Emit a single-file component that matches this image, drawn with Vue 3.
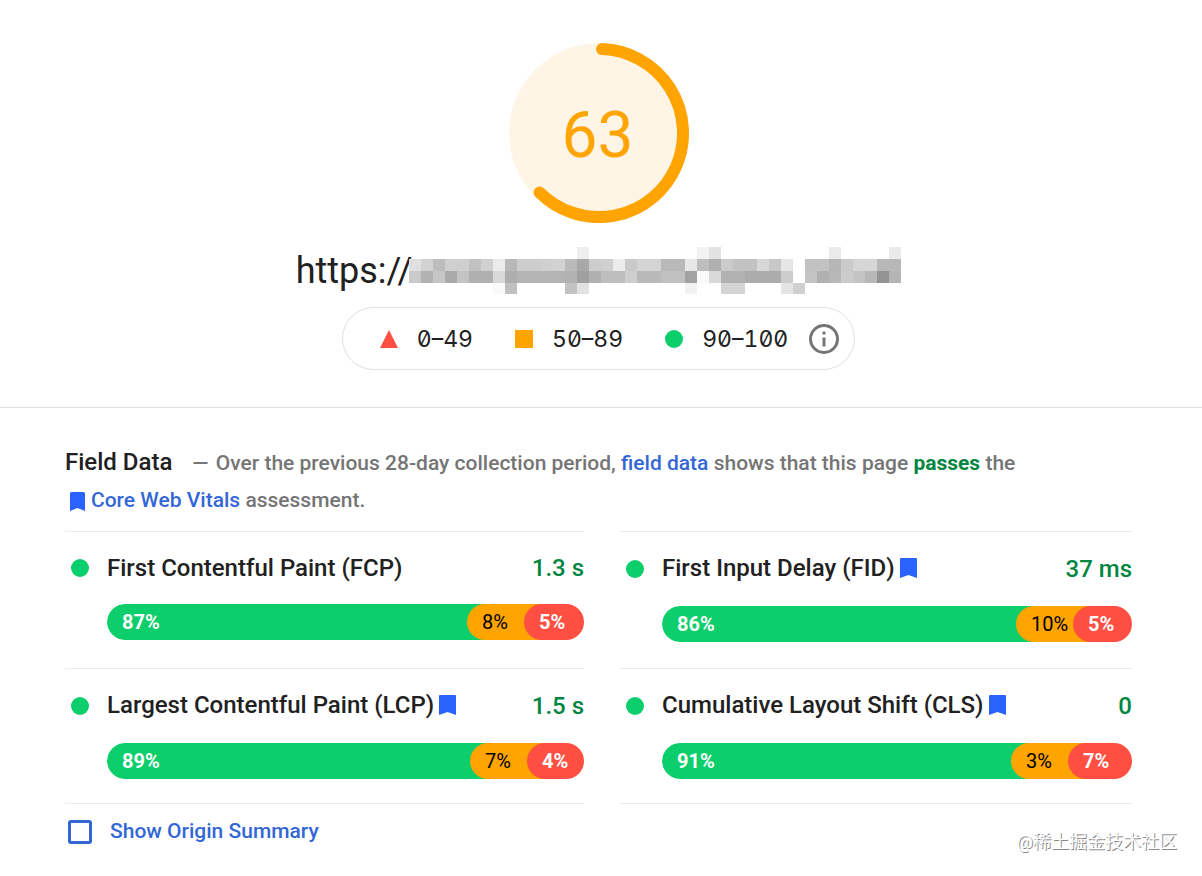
<script setup>
const mosaic = [
  '-------------- ef --------- f2 e2 --------- ea ---- ea',
  'e0 d2 bd cf cf c2 d0 eb b8 cd cd d0 d2 ba a8 cd d0 ec ca d4 d4 b9 b9 e8 be b0 cb c2 c2 d8 c8 e6 - c2 c2 b6 ca d6 d6 b8 b8',
  'ca b2 c6 aa c4 b0 b0 d8 ae b4 b4 b4 b4 b2 a0 b0 be be cf b9 b9 c0 c0 a2 fa d8 b2 b2 ac ac ac cd - c4 b0 b8 cc c4 b8 94 b4',
  '------- fa c0 ---- c2 e2 -------- f2 -- d4 d4 --- e4 d0'
]
const cells = mosaic.flatMap((row, y) => {
  let x = 0
  const out = []
  for (const token of row.split(' ')) {
    if (token[0] === '-') {
      x += token.length
    } else {
      out.push({ x: x * 12, y: y * 12, fill: '#' + token.repeat(3) })
      x += 1
    }
  }
  return out
})

const metrics = [
  { name: 'First Contentful Paint (FCP)', core: false, value: '1.3 s', good: 87, avg: 8, poor: 5, split: [360, 57, 60] },
  { name: 'First Input Delay (FID)', core: true, value: '37 ms', good: 86, avg: 10, poor: 5, split: [354, 57, 59] },
  { name: 'Largest Contentful Paint (LCP)', core: true, value: '1.5 s', good: 89, avg: 7, poor: 4, split: [363, 57, 57] },
  { name: 'Cumulative Layout Shift (CLS)', core: true, value: '0', good: 91, avg: 3, poor: 7, split: [349, 57, 64] }
]
const columns = (split) => split.map((n) => `minmax(0, ${n}fr)`).join(' ')
</script>

<template>
  <main class="report">
    <header class="summary">
      <div class="gauge">
        <svg viewBox="0 0 180 180" aria-hidden="true">
          <circle cx="90" cy="90" r="90" fill="#fff5e6" />
          <path d="M93 6.1A84 84 0 1 1 30.6 149.4" fill="none" stroke="#ffa400" stroke-width="12" stroke-linecap="round" />
        </svg>
        <span class="score">63</span>
      </div>
      <h1 class="url">
        <span class="scheme">https://</span>
        <svg class="mosaic" viewBox="0 0 492 47" shape-rendering="crispEdges" aria-hidden="true">
          <rect v-for="(c, i) in cells" :key="i" :x="c.x" :y="c.y" width="12" height="12" :fill="c.fill" />
        </svg>
      </h1>
      <div class="legend">
        <span class="range">
          <svg class="mark" viewBox="0 0 18 18" aria-hidden="true"><path d="M9 0L18 18H0z" fill="#ff4e42" /></svg>0–49
        </span>
        <span class="range">
          <svg class="mark" viewBox="0 0 18 18" aria-hidden="true"><path d="M0 0H18V18H0z" fill="#ffa400" /></svg>50–89
        </span>
        <span class="range">
          <svg class="mark" viewBox="0 0 18 18" aria-hidden="true"><circle cx="9" cy="9" r="9" fill="#0cce6b" /></svg>90–100
        </span>
        <button class="info" type="button" aria-label="About the score">
          <svg viewBox="0 0 30 30" aria-hidden="true">
            <circle cx="15" cy="15" r="13.5" fill="none" stroke="#757575" stroke-width="3" />
            <path d="M13.5 7.5h3v3h-3zM13.5 13.5h3v9h-3z" fill="#757575" />
          </svg>
        </button>
      </div>
    </header>

    <section class="field">
      <p class="intro">
        <strong class="title">Field Data</strong><span class="dash">—</span> Over the previous 28-day collection period, <a href="#field">field data</a> shows that this page <b class="pass">passes</b> the
        <br />
        <svg class="bookmark small" viewBox="0 0 15 19" aria-hidden="true"><path d="M1.500 0H13.500Q15 0 15 1.500V19L7.500 16L0 19V1.500Q0 0 1.500 0z" fill="#2962ff" /></svg><a href="#vitals">Core Web Vitals</a> assessment.
      </p>

      <div class="metrics">
        <article v-for="m in metrics" :key="m.name" class="metric">
          <div class="head" :class="{ core: m.core }">
            <span class="dot"></span>
            <h2 class="name">{{ m.name }}</h2>
            <svg v-if="m.core" class="bookmark" viewBox="0 0 17 20" aria-hidden="true"><path d="M1 0H16Q17 0 17 1V20L8.500 17L0 20V1Q0 0 1 0z" fill="#2962ff" /></svg>
            <span class="value">{{ m.value }}</span>
          </div>
          <div class="bar" :style="{ gridTemplateColumns: columns(m.split) }">
            <span class="part good">{{ m.good }}%</span>
            <span class="part avg">{{ m.avg }}%</span>
            <span class="part poor">{{ m.poor }}%</span>
          </div>
        </article>
      </div>

      <label class="origin">
        <input type="checkbox" />
        <span>Show Origin Summary</span>
      </label>
    </section>
    <span class="watermark">@稀土掘金技术社区</span>
  </main>
</template>

<style>
body {
  margin: 0;
  background: #fff;
}
</style>

<style scoped>
.report {
  position: relative;
  min-height: 100vh;
  box-sizing: border-box;
  font-family: Roboto, "Noto Sans CJK SC", sans-serif;
  color: #212121;
}
.summary {
  display: flex;
  flex-direction: column;
  align-items: center;
  padding: 43px 5px 37px 0;
  border-bottom: 1px solid #e0e0e0;
}
.gauge {
  display: grid;
  width: 180px;
  height: 180px;
  place-items: center;
}
.gauge svg,
.score {
  grid-area: 1 / 1;
}
.score {
  padding: 6px 2px 0 0;
  font-size: 64px;
  line-height: 64px;
  color: #ffa400;
}
.url {
  display: flex;
  align-items: center;
  margin: 24px 0 13px;
  font-size: 36px;
  line-height: 43px;
  font-weight: 400;
}
.scheme {
  padding-top: 2px;
}
.mosaic {
  width: 492px;
  height: 47px;
  margin-left: -3px;
}
.legend {
  display: flex;
  align-items: center;
  gap: 42px;
  box-sizing: border-box;
  height: 63px;
  padding: 0 15px 0 37px;
  border: 1px solid #e0e0e0;
  border-radius: 32px;
  font-family: Inter, sans-serif;
  font-size: 23px;
  font-feature-settings: "zero", "tnum";
}
.range {
  display: flex;
  align-items: center;
  gap: 19px;
}
.mark {
  width: 18px;
  height: 18px;
}
.info {
  width: 30px;
  height: 30px;
  margin-left: -21px;
  padding: 0;
  border: 0;
  background: none;
}
.info svg {
  display: block;
}
.field {
  padding: 37px 70px 30px 65px;
}
.intro {
  margin: 0 0 12px;
  font-size: 21px;
  line-height: 37px;
  font-weight: 500;
  color: #757575;
}
.title {
  margin-right: 20px;
  font-size: 24px;
  line-height: 28px;
  font-weight: 500;
  color: #212121;
}
.dash {
  margin-right: 2px;
}
a,
.origin {
  color: #3367d6;
  text-decoration: none;
}
.pass {
  font-weight: 700;
  color: #018642;
}
.bookmark {
  width: 17px;
  height: 20px;
  flex: none;
  margin-left: 5px;
}
.bookmark.small {
  width: 15px;
  height: 19px;
  margin: 0 6px 0 5px;
  vertical-align: -4px;
}
.metrics {
  display: grid;
  grid-template-columns: minmax(0, 519fr) minmax(0, 512fr);
  column-gap: 36px;
}
.metric {
  padding: 19px 0 26px;
  border-top: 1px solid #ebebeb;
}
.metric:nth-last-child(-n + 2) {
  padding-bottom: 24px;
  border-bottom: 1px solid #ebebeb;
}
.head {
  display: flex;
  align-items: center;
  height: 34px;
  margin-bottom: 19px;
  font-size: 24px;
  font-weight: 500;
}
.head.core {
  height: 36px;
}
.dot {
  width: 18px;
  height: 18px;
  margin: 0 18px 0 6px;
  border-radius: 50%;
  background: #0cce6b;
}
.name {
  margin: 0;
  font-size: 24px;
  line-height: 28px;
  font-weight: 500;
}
.core .name,
.core .bookmark {
  margin-bottom: 2px;
}
.value {
  margin-left: auto;
  color: #018642;
}
.bar {
  display: grid;
  margin-left: 42px;
  border-radius: 18px;
  overflow: hidden;
  font-size: 20px;
  line-height: 36px;
}
.part {
  padding-left: 15px;
  border-radius: 18px 0 0 18px;
}
.good {
  margin-right: -20px;
  background: #0cce6b;
  color: #fff;
  font-weight: 700;
}
.avg {
  margin-right: -20px;
  background: #ffa400;
  color: #000;
}
.poor {
  background: #ff4e42;
  color: #fff;
  font-weight: 700;
}
.origin {
  display: inline-flex;
  align-items: center;
  gap: 18px;
  margin: 14px 0 0 3px;
  font-size: 21px;
  line-height: 27px;
  font-weight: 500;
}
.origin input {
  appearance: none;
  box-sizing: border-box;
  width: 24px;
  height: 24px;
  margin: 0;
  border: 3px solid #3367d6;
  border-radius: 3px;
}
.watermark {
  position: absolute;
  right: 25px;
  bottom: 23px;
  font-size: 18px;
  line-height: 26px;
  color: #fff;
  text-shadow: 1px 1px 0 #888;
}
</style>
